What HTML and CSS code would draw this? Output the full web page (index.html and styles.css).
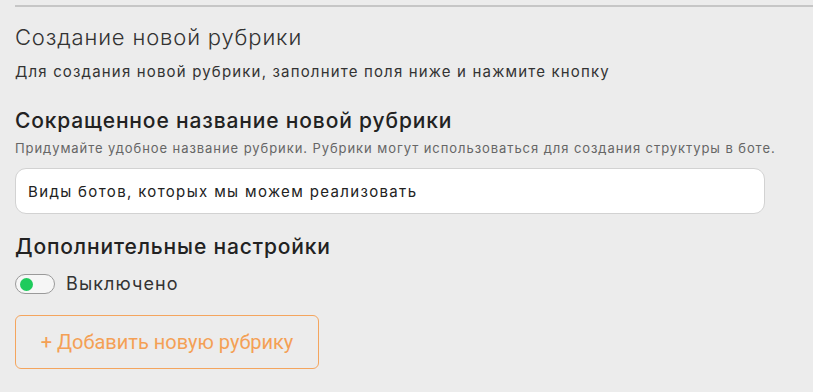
FILE: index.html
```html
<!DOCTYPE html>
<html lang="ru">
<head>
    <meta charset="UTF-8">
    <meta name="viewport" content="width=device-width, initial-scale=1.0">
    <title>Создание новой рубрики</title>
    <link rel="stylesheet" href="styles.css">
</head>
<body>

<!-- Форма новой рубрики -->
<div class="section">
    <h2 class="title">Создание новой рубрики</h2>
    <p class="lead">Для создания новой рубрики, заполните поля ниже и нажмите кнопку</p>

    <div class="form-group">
        <label class="label" for="shortName">Сокращенное название новой рубрики</label>
        <p class="hint">Придумайте удобное название рубрики. Рубрики могут использоваться для создания структуры в боте.</p>
        <input type="text" id="shortName" class="field" value="Виды ботов, которых мы можем реализовать">
    </div>

    <div class="form-group">
        <div class="label label-alt">Дополнительные настройки</div>
        <div class="switch-row">
            <span class="switch"><span class="knob"></span></span>
            <span class="switch-text">Выключено</span>
        </div>
    </div>

    <button class="add-btn">+ Добавить новую рубрику</button>
</div>

</body>
</html>
```

FILE: styles.css
```css
body {
    font-family: Inter, "Noto Sans", sans-serif;
    background-color: #ececec;
    color: #2b2b2b;
    margin: 0;
    padding: 5px 0 0 15px;
}

.section {
    border-top: 2px solid #c6c6c6;
    padding-top: 16px;
}

.title {
    font-size: 22px;
    font-weight: 300;
    line-height: 28px;
    letter-spacing: 0.85px;
    margin: 0 0 11px;
    color: #333;
}

.lead {
    font-size: 15px;
    line-height: 20px;
    letter-spacing: 1.17px;
    margin: 0 0 26px;
    color: #333;
}

.form-group {
    margin-bottom: 20px;
}

.label {
    display: block;
    font-size: 21px;
    font-weight: 500;
    line-height: 26px;
    letter-spacing: 0.85px;
    color: #222;
    margin-bottom: 6px;
}

.label-alt {
    letter-spacing: 0.85px;
    margin-bottom: 13px;
}

.hint {
    font-size: 13px;
    line-height: 16px;
    letter-spacing: 0.93px;
    color: #666;
    margin: 0 0 12px;
}

.field {
    box-sizing: border-box;
    display: block;
    width: 750px;
    height: 46px;
    padding: 0 12px;
    border: 1px solid #d2d2d2;
    border-radius: 11px;
    background-color: #fff;
    font-family: inherit;
    font-size: 15px;
    letter-spacing: 1.35px;
    color: #222;
}

.switch-row {
    display: flex;
    align-items: center;
    gap: 11px;
    height: 22px;
}

.switch {
    box-sizing: border-box;
    width: 40px;
    height: 20px;
    border: 1px solid #9a9a9a;
    border-radius: 10px;
    background-color: #f6f6f6;
    display: flex;
    align-items: center;
    padding-left: 4px;
}

.knob {
    width: 13px;
    height: 13px;
    border-radius: 50%;
    background-color: #1fcb5c;
}

.switch-text {
    font-size: 18px;
    line-height: 22px;
    letter-spacing: 1.1px;
    color: #333;
}

.add-btn {
    box-sizing: border-box;
    display: block;
    width: 304px;
    height: 54px;
    border: 1px solid #f4a55e;
    border-radius: 6px;
    background: transparent;
    color: #f4a055;
    font-family: Roboto, sans-serif;
    font-size: 20px;
    cursor: pointer;
}
```
